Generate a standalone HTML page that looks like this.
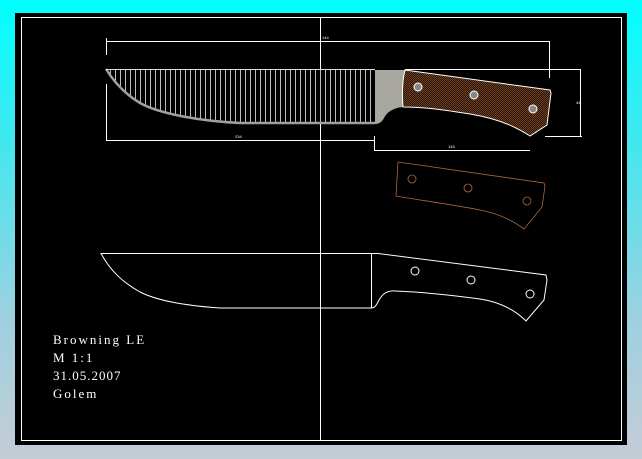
<!DOCTYPE html>
<html><head><style>
html,body{margin:0;padding:0;}
body{width:642px;height:459px;overflow:hidden;background:linear-gradient(#00ffff 0%,#40e8f0 30%,#9fd0e0 70%,#c4ccd6 100%);position:relative;}
svg{position:absolute;left:0;top:0;}
.t{font-family:"Liberation Serif",serif;font-size:13px;fill:#fff;letter-spacing:2px;}
</style></head><body>
<svg width="642" height="459" viewBox="0 0 642 459">
<defs>
<pattern id="h" width="5" height="60" patternUnits="userSpaceOnUse"><rect x="0" y="0" width="1" height="60" fill="#bbb"/></pattern>
<pattern id="ck" width="2" height="2" patternUnits="userSpaceOnUse"><rect width="2" height="2" fill="#2a1508"/><rect width="1" height="1" fill="#6e3e20"/><rect x="1" y="1" width="1" height="1" fill="#6e3e20"/></pattern>
<clipPath id="bl"><path d="M106,69 L375,69 L375,123 L240,123 C200,121 160,114 140,103 C125,94 114,82 106,69 Z"/></clipPath>
</defs>
<rect x="15" y="13" width="612" height="432" fill="#000"/>
<rect x="21.5" y="17.5" width="600" height="423" fill="none" stroke="#fff" stroke-width="1"/>
<line x1="320.5" y1="17" x2="320.5" y2="441" stroke="#fff"/>
<g stroke="#fff" stroke-width="1" fill="none">
<line x1="106" y1="41.5" x2="550" y2="41.5"/>
<line x1="106.5" y1="38" x2="106.5" y2="55"/>
<line x1="549.5" y1="41" x2="549.5" y2="78"/>
<line x1="106.5" y1="84" x2="106.5" y2="141"/>
<line x1="106" y1="140.5" x2="375" y2="140.5"/>
<line x1="374.5" y1="136" x2="374.5" y2="151"/>
<line x1="375" y1="150.5" x2="530" y2="150.5"/>
<line x1="405" y1="69.5" x2="581" y2="69.5"/>
<line x1="580.5" y1="69" x2="580.5" y2="137"/>
<line x1="545" y1="136.5" x2="582" y2="136.5"/>
</g>
<text x="322" y="39" font-size="4" fill="#fff" font-family="Liberation Sans">144</text>
<text x="235" y="138" font-size="4" fill="#fff" font-family="Liberation Sans">234</text>
<text x="448" y="148" font-size="4" fill="#fff" font-family="Liberation Sans">145</text>
<text x="576" y="104" font-size="4" fill="#fff" font-family="Liberation Sans">44</text>
<g clip-path="url(#bl)"><rect x="106" y="69" width="270" height="60" fill="url(#h)"/></g>
<path d="M106,69 C114,82 125,94 140,103 C160,114 200,121 240,123 L375,123" fill="none" stroke="#a0a0a0" stroke-width="2.5"/>
<line x1="106" y1="69.5" x2="375" y2="69.5" stroke="#ddd"/>
<path d="M375,70 L405,70 L403,107 C393,108 387,112 384,118 C382,122 379,124 375,124 Z" fill="#a8a8a0"/>
<path d="M405,70 L550,90 L551,93 L547,125 L530,136 C515,126 495,118 470,114 C445,110 425,107 403,107 C402,95 402,82 405,70 Z" fill="url(#ck)" stroke="#fff" stroke-width="1"/>
<g fill="#888" stroke="#fff" stroke-width="1"><circle cx="418" cy="87" r="4"/><circle cx="474" cy="95" r="4"/><circle cx="533" cy="109" r="4"/></g>
<g fill="none" stroke="#b06838" stroke-width="0.8">
<path d="M398,162 L544,183 L545,186 L542,207 L524,229 C515,222 500,214 480,210 C455,205 425,201 396,196 Z"/>
<circle cx="412" cy="179" r="4"/><circle cx="468" cy="188" r="4"/><circle cx="527" cy="201" r="4"/>
</g>
<g fill="none" stroke="#fff" stroke-width="1">
<path d="M101,253.5 L378,253.5 L546,275 L547,280 L544,300 L526,321 C515,310 500,302 480,299 C450,295 420,292 396,291 C385,290 381,296 378,302 C376,306 374,308 372,308 L220,308 C190,306 160,302 140,292 C122,282 110,270 101,253.5 Z"/>
<line x1="371.5" y1="253" x2="371.5" y2="308"/>
<circle cx="415" cy="271" r="4"/><circle cx="471" cy="280" r="4"/><circle cx="530" cy="294" r="4"/>
</g>
<text class="t" x="53" y="344">Browning LE</text>
<text class="t" x="53" y="362">M 1:1</text>
<text class="t" x="53" y="380" style="letter-spacing:1px">31.05.2007</text>
<text class="t" x="53" y="398">Golem</text>
</svg>
</body></html>
